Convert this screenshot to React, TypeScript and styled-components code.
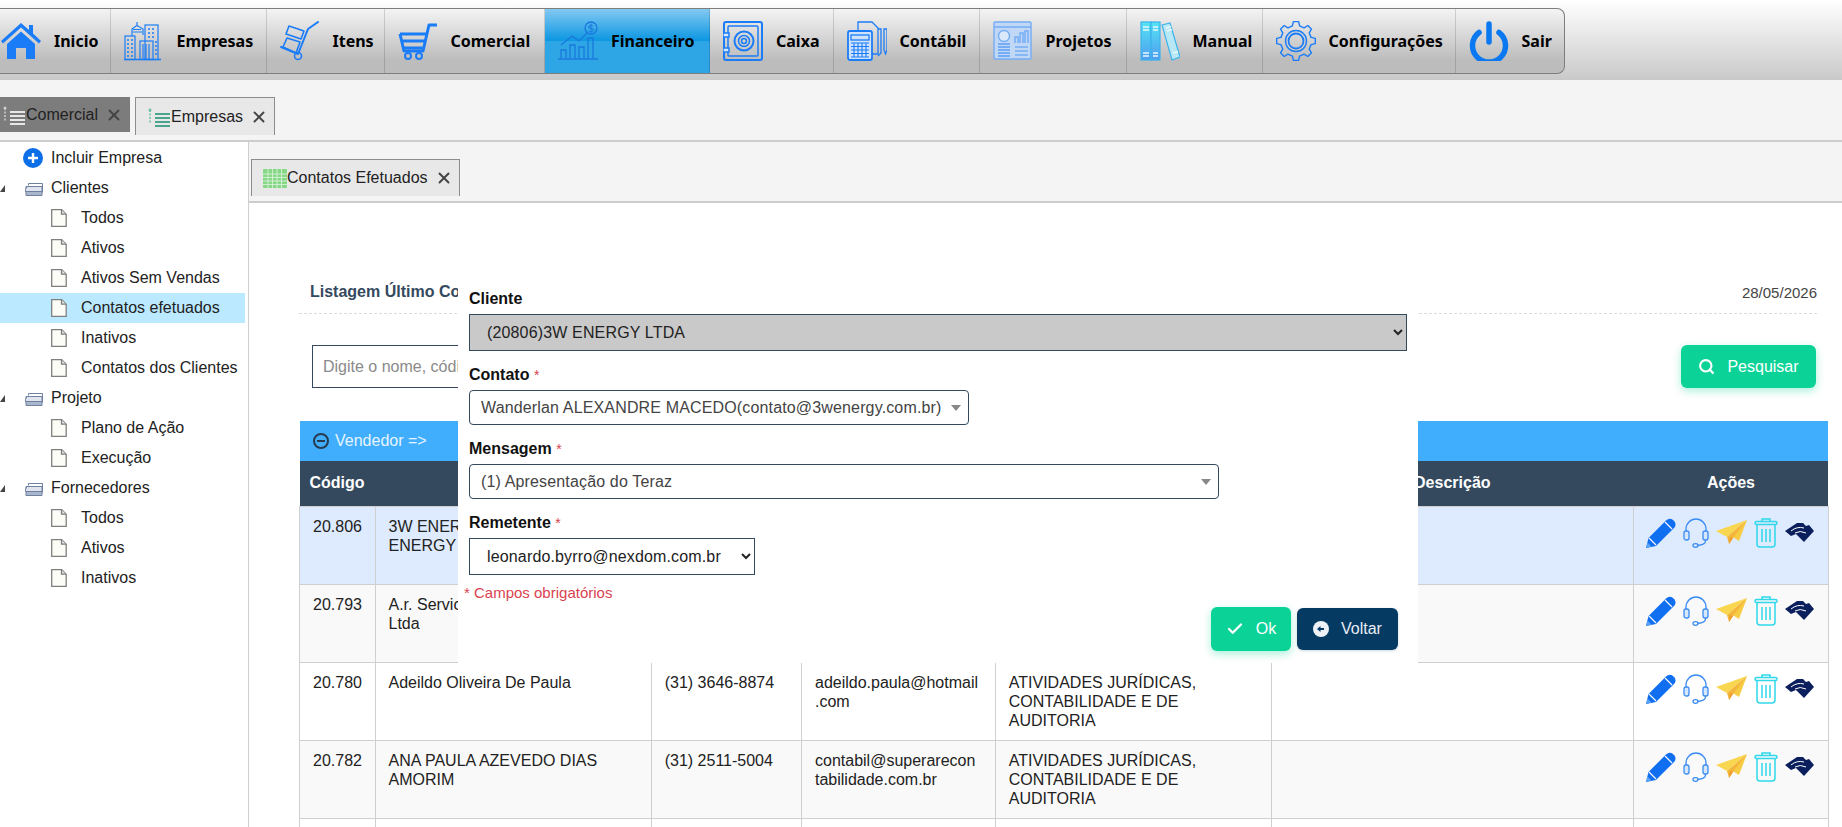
import React from 'react'
import styled, { createGlobalStyle } from 'styled-components'
import { Check, Search, X } from 'lucide-react'

const BLUE = '#1b7cf7'
const SLATE = '#34495e'
const GREEN = '#0bd398'

const GlobalStyle = createGlobalStyle`
  html, body {
    margin: 0;
    padding: 0;
    background: #fff;
    overflow: hidden;
  }
  body {
    font-family: "Liberation Sans", Arial, sans-serif;
    font-size: 16px;
    color: #222;
  }
  * { box-sizing: border-box; }
`

const Page = styled.div`
  height: 100vh;
  display: flex;
  flex-direction: column;
  overflow: hidden;
`

const Header = styled.header`
  height: 80px;
  flex: none;
  padding-top: 8px;
  background: linear-gradient(#ffffff, #c9c9c9);
`

const Nav = styled.nav`
  display: inline-flex;
  height: 66px;
  margin-left: -12px;
  border: 1px solid #7d7d7d;
  border-left: 0;
  border-radius: 0 8px 8px 0;
  overflow: hidden;
  background: linear-gradient(#f4f4f4, #e6e6e6 20%, #bcbcbc 80%, #bdbdbd);
`

const NavItem = styled.a<{ $active?: boolean; $width: number }>`
  display: flex;
  align-items: center;
  gap: 13px;
  width: ${(p) => p.$width}px;
  padding-left: 13px;
  border-right: 1px solid rgba(0, 0, 0, 0.14);
  font-family: "Noto Sans", sans-serif;
  font-size: 16px;
  font-weight: bold;
  color: #000;
  white-space: nowrap;
  cursor: pointer;
  background: ${(p) =>
    p.$active ? 'linear-gradient(#83c9f2, #0d97e2 49%, #2ea6e6 51%, #2ea6e6)' : 'transparent'};

  &:last-child {
    border-right: 0;
  }
  svg {
    width: 40px;
    height: 40px;
    flex: none;
  }
`

const TabRow = styled.div`
  height: 62px;
  flex: none;
  display: flex;
  align-items: flex-start;
  gap: 5px;
  padding-top: 17px;
  margin-left: -10px;
  background: #f4f4f4;
  border-bottom: 2px solid #cdcdcd;
`

const Tab = styled.div<{ $dark?: boolean }>`
  display: flex;
  align-items: center;
  height: ${(p) => (p.$dark ? '35px' : '38px')};
  padding: 0 6px 0 11px;
  border: 1px solid ${(p) => (p.$dark ? '#7c7c7c' : '#8c8c8c')};
  border-bottom: 0;
  background: ${(p) => (p.$dark ? '#7c7c7c' : '#e8e8e8')};
  color: #222;
  white-space: nowrap;

  > svg:first-child {
    flex: none;
  }
`

const SubTab = styled(Tab)`
  height: 37px;
`

const TabClose = styled(X)`
  width: 18px;
  height: 18px;
  margin-left: 7px;
  color: #444;
  stroke-width: 2.5;
`

const Body = styled.div`
  flex: 1;
  display: flex;
  min-height: 0;
`

const Sidebar = styled.aside`
  width: 249px;
  flex: none;
  padding-top: 1px;
  background: #fff;
  border-right: 1px solid #cfcfcf;
`

const TreeRow = styled.div<{ $child?: boolean; $selected?: boolean }>`
  display: flex;
  align-items: center;
  height: 30px;
  width: 245px;
  padding-left: ${(p) => (p.$child ? '51px' : '0')};
  background: ${(p) => (p.$selected ? '#bbe9ff' : 'transparent')};
  color: #222;
  white-space: nowrap;
`

const Toggler = styled.span`
  width: 0;
  height: 0;
  margin: 0 20px 0 0;
  border-style: solid;
  border-width: 0 0 7px 5px;
  border-color: transparent transparent #444 transparent;
`

const Main = styled.main`
  flex: 1;
  min-width: 0;
  position: relative;
`

const SubTabRow = styled.div`
  height: 61px;
  padding: 17px 0 0 2px;
  background: #f4f4f4;
  border-bottom: 2px solid #cdcdcd;
  display: flex;
`

const Content = styled.div`
  padding: 0 14px 0 50px;
`

const TitleRow = styled.div`
  display: flex;
  align-items: center;
  justify-content: space-between;
  height: 32px;
  margin: 79px 11px 0 0;
  padding: 0 0 11px 11px;
  border-bottom: 1px dashed #dcdcdc;
`

const Title = styled.h1`
  margin: 0;
  font-size: 16px;
  font-weight: bold;
  color: ${SLATE};
`

const DateText = styled.span`
  font-size: 15px;
  color: #444;
`

const SearchRow = styled.div`
  display: flex;
  align-items: center;
  justify-content: space-between;
  margin: 31px 12px 0 13px;
`

const SearchInput = styled.input`
  width: 1100px;
  height: 43px;
  padding: 0 10px;
  border: 1px solid ${SLATE};
  font: 16px "Liberation Sans", Arial, sans-serif;
  &::placeholder {
    color: #8a8a8a;
  }
`

const Button = styled.button<{ $variant: 'green' | 'navy' }>`
  display: inline-flex;
  align-items: center;
  justify-content: center;
  gap: 12px;
  border: 0;
  border-radius: 6px;
  font: 16px "Liberation Sans", Arial, sans-serif;
  color: ${(p) => (p.$variant === 'green' ? '#fff' : '#e8edf3')};
  background: ${(p) => (p.$variant === 'green' ? GREEN : '#053a63')};
  box-shadow: ${(p) =>
    p.$variant === 'green' ? '0 3px 8px rgba(11, 211, 152, 0.35)' : '0 1px 3px rgba(5, 58, 99, 0.2)'};
`

const SearchButton = styled(Button)`
  width: 135px;
  height: 43px;
`

const VendorBar = styled.div`
  display: flex;
  align-items: center;
  gap: 6px;
  height: 40px;
  margin-top: 33px;
  margin-left: 1px;
  padding-left: 13px;
  background: #40aefc;
  color: #e6f4ff;
`

const Table = styled.table`
  width: 1529px;
  border-collapse: collapse;
  table-layout: fixed;
`

const HeadCell = styled.th<{ $align?: string }>`
  height: 45px;
  padding: 0 10px;
  background: ${SLATE};
  color: #fff;
  font-size: 16px;
  font-weight: bold;
  text-align: ${(p) => p.$align ?? 'center'};
`

const Row = styled.tr<{ $tone: 'selected' | 'odd' | 'even' }>`
  background: ${(p) => (p.$tone === 'selected' ? '#deebfe' : p.$tone === 'odd' ? '#f9f9f9' : '#fff')};
`

const Cell = styled.td`
  height: 78px;
  padding: 10px 13px;
  border: 1px solid #cfcfcf;
  font-size: 16px;
  line-height: 19px;
  vertical-align: top;
  color: #222;
  overflow-wrap: anywhere;
`

const CodeCell = styled(Cell)`
  padding-right: 4px;
`

const MailCell = styled(Cell)`
  padding-right: 16px;
`

const Actions = styled.div`
  display: flex;
  align-items: center;
  gap: 7px;
  margin: 1px 0 0 -1px;
  svg {
    flex: none;
  }
`

const Modal = styled.div`
  position: absolute;
  left: 209px;
  top: 133px;
  width: 960px;
  height: 388px;
  padding: 14px 11px 0;
  background: #fff;
`

const Field = styled.div`
  margin-bottom: 14px;
`

const Label = styled.label`
  display: block;
  height: 20px;
  margin-bottom: 5px;
  font-size: 16px;
  line-height: 20px;
  font-weight: bold;
  color: #111;

  span {
    font-size: 14px;
    font-weight: normal;
    color: #d9434f;
  }
`

const NativeSelect = styled.select<{ $width: string; $locked?: boolean }>`
  display: block;
  width: ${(p) => p.$width};
  height: 37px;
  padding: 0 10px 0 13px;
  border: 1px solid ${SLATE};
  border-radius: 0;
  font: 16px "Liberation Sans", Arial, sans-serif;
  letter-spacing: 0.15px;
  color: #222;
  background: ${(p) => (p.$locked ? '#c9c9c9' : '#fff')};
`

const FakeSelect = styled.div<{ $width: string }>`
  display: flex;
  align-items: center;
  justify-content: space-between;
  width: ${(p) => p.$width};
  height: 35px;
  padding: 0 7px 0 11px;
  border: 1px solid ${SLATE};
  border-radius: 4px;
  letter-spacing: 0.15px;
  color: #444;
  white-space: nowrap;

  &::after {
    content: '';
    width: 0;
    height: 0;
    border-style: solid;
    border-width: 6px 5px 0 5px;
    border-color: #888 transparent transparent transparent;
  }
`

const RequiredNote = styled.div`
  height: 18px;
  margin: -5px 0 0 -5px;
  font-size: 15px;
  line-height: 18px;
  color: #d9434f;
`

const ModalButtons = styled.div`
  display: flex;
  align-items: center;
  justify-content: flex-end;
  gap: 6px;
  margin: 5px 9px 0 0;
`

const OkButton = styled(Button)`
  width: 80px;
  height: 44px;
`

const BackButton = styled(Button)`
  width: 101px;
  height: 42px;
`

// --- menu drawings ---

const HomeIcon = () => (
  <svg viewBox="0 0 40 40" fill={BLUE}>
    <path d="M0 20 20 2l8 7V4h4v8.500l8 7.500-2 2.500L20 6.500 2 22.500z" />
    <path d="M6 23 20 10.500 34 23v15H25V27H15v11H6z" />
  </svg>
)

const BuildingsIcon = () => (
  <svg viewBox="0 0 40 40" fill="none" stroke={BLUE} strokeWidth="1.200">
    <path d="M0 38.500h37" strokeWidth="1.500" />
    <rect x="1" y="15" width="10" height="23.500" />
    <path d="M8 15V8l4-3h2l5 3v6" />
    <path d="M13 1v4M9 11h9M9 8.500h8" />
    <rect x="21" y="4" width="13" height="34.500" />
    <rect x="16" y="20" width="13" height="18.500" />
    <path d="M19 23v15M22 23v15M25 23v15" />
    <g strokeDasharray="2 2" strokeWidth="1.500">
      <path d="M3 19h6M3 23h6M3 27h6M3 31h6M3 35h6M24 8h8M24 12h8M24 16h8M31 21h2M31 25h2M31 29h2M31 33h2" />
    </g>
  </svg>
)

const TrolleyIcon = () => (
  <svg viewBox="0 0 40 40" fill="none" stroke={BLUE} strokeWidth="1.600" strokeLinejoin="round">
    <path d="M38 1 28 8 18 33 1 26" strokeLinecap="round" strokeWidth="2" />
    <path d="M9 5 24 10 21 18 6 13z" />
    <path d="M7 17 20 21 16 32 3 26z" />
    <circle cx="18" cy="35" r="3.500" />
  </svg>
)

const CartIcon = () => (
  <svg viewBox="0 0 40 40" fill="none" stroke={BLUE}>
    <path d="M2 13h27M4 20h23M5.500 27h19" strokeWidth="3" />
    <path d="M2 13 6 30h19L31 4h8" strokeWidth="3" strokeLinejoin="round" />
    <circle cx="10" cy="35" r="3" strokeWidth="2" />
    <circle cx="21" cy="35" r="3" strokeWidth="2" />
  </svg>
)

const FinanceIcon = () => (
  <svg viewBox="0 0 40 40" fill="none" stroke="#1a78dc" strokeWidth="1.300">
    <path d="M0 38h40" />
    <path d="M3 37V29h5v8M12 37V24h5v13M21 37V26h5v11M30 37V17h5v20" />
    <path d="M3 24 14 15 21 20 30 11" />
    <circle cx="33" cy="7" r="6" />
    <path d="M35 5q-2-2-4 0t2 2q4 1 2 3t-4 0M33 2.500v9" strokeWidth="1" />
  </svg>
)

const SafeIcon = () => (
  <svg viewBox="0 0 40 40" fill="none" stroke={BLUE} strokeWidth="1.500">
    <rect x="1" y="1" width="38" height="38" rx="2" strokeWidth="2" />
    <rect x="5" y="5" width="30" height="30" rx="1" />
    <path d="M0 12h6v4H0zM0 27h6v4H0z" fill="#d6e8ff" />
    <circle cx="21" cy="20" r="9.500" strokeWidth="2" />
    <circle cx="21" cy="20" r="5.500" />
    <circle cx="21" cy="20" r="2.500" />
  </svg>
)

const LedgerIcon = () => (
  <svg viewBox="0 0 40 40" fill="none" stroke={BLUE} strokeWidth="1.300">
    <path d="M11 10V1h14l6 6v26h-6" />
    <path d="M31 8h3v24l-3 3" />
    <path d="M37 8v21l1.500 4L40 29V8z" />
    <rect x="1" y="10" width="24" height="29" rx="2" fill="#cfe2fb" strokeWidth="1.800" />
    <rect x="4" y="14" width="18" height="5" />
    <path d="M4 22h18M4 25.500h18M4 29h18M4 32.500h18M4 36h18M7 22v14M11 22v14M15 22v14M19 22v14" strokeWidth="1.100" />
  </svg>
)

const ProjectsIcon = () => (
  <svg viewBox="0 0 40 40" fill="none" stroke="#74adf5" strokeWidth="1.400">
    <rect x="1" y="1" width="37" height="37" rx="1" fill="#c0d8f5" />
    <path d="M1 6h37" strokeWidth="1.500" />
    <circle cx="11" cy="15" r="5.500" fill="#dce9fa" />
    <path d="M5 23h12M5 26h12M5 29h12M5 32h12M5 35h12" strokeWidth="2" />
    <path d="M22 22v-6h3v6M27 22V12h3v10M32 22V10h3v12" strokeWidth="1.500" />
    <path d="M22 26h13M22 30h13M22 34h13" />
  </svg>
)

const BindersIcon = () => (
  <svg viewBox="0 0 40 40" fill="none" strokeWidth="1.200">
    <defs>
      <linearGradient id="binderFill" x1="0" y1="0" x2="0" y2="1">
        <stop offset="0" stopColor="#54e4f4" />
        <stop offset="1" stopColor="#4f9cf0" />
      </linearGradient>
    </defs>
    <g fill="url(#binderFill)" stroke="#3db3ec">
      <rect x="1" y="1" width="10" height="38" />
      <rect x="11" y="1" width="9" height="38" />
      <path d="M22 4 30 2 40 36 32 39z" fill="#b8e8f6" />
    </g>
    <path d="M3 6h6M3 9h6M13 6h5M13 9h5M3 32h6M3 35h6M13 32h5M13 35h5M26 7l5-1.500M27 10l5-1.500M33 32l5-1.500" stroke="#e9f8fd" strokeWidth="1.500" />
  </svg>
)

function gearPath(teeth: number, outer: number, inner: number) {
  const step = (Math.PI * 2) / teeth
  const parts: string[] = []
  for (let i = 0; i < teeth; i++) {
    const a = i * step
    const pts = [
      [inner, a - step * 0.3],
      [outer, a - step * 0.17],
      [outer, a + step * 0.17],
      [inner, a + step * 0.3],
    ]
    pts.forEach(([r, t]) => {
      parts.push(`${(20 + r * Math.cos(t)).toFixed(2)} ${(20 + r * Math.sin(t)).toFixed(2)}`)
    })
  }
  return `M${parts.join('L')}Z`
}

const GearIcon = () => (
  <svg viewBox="0 0 40 40" fill="none" stroke={BLUE} strokeWidth="1.400" strokeLinejoin="round">
    <path d={gearPath(8, 19.500, 15.500)} />
    <circle cx="20" cy="20" r="10.500" />
    <circle cx="20" cy="20" r="7.500" strokeWidth="1.800" />
  </svg>
)

const PowerIcon = () => (
  <svg viewBox="0 0 40 40" fill="none" stroke="#0a78f0" strokeWidth="5.500" strokeLinecap="round">
    <path d="M10 11.500a16.500 16.500 0 1 0 20 0" />
    <path d="M20 3v18" />
  </svg>
)

// --- small drawings ---

const ListIcon = ({ lines, dots }: { lines: string; dots: string }) => (
  <svg width="24" height="24" viewBox="0 0 24 24" fill="none">
    <path d="M3 5v14" stroke={dots} strokeWidth="1.500" strokeDasharray="2 1.500" />
    <circle cx="3" cy="5" r="1.500" fill={dots} />
    <path d="M8 9h15M8 13h15M8 17h15M8 21h15" stroke={lines} strokeWidth="1.800" />
  </svg>
)

const GridIcon = () => (
  <svg width="24" height="19" viewBox="0 0 24 19" fill="#86d886">
    <rect width="24" height="19" rx="1" />
    <path d="M0 5h24M0 8.500h24M0 12h24M0 15.500h24M5 0v19M9.500 0v19M14 0v19M18.500 0v19" stroke="#dff5df" strokeWidth="0.800" />
  </svg>
)

const PlusCircle = () => (
  <svg width="20" height="20" viewBox="0 0 20 20">
    <circle cx="10" cy="10" r="10" fill="#0d6fe8" />
    <path d="M10 5v10M5 10h10" stroke="#fff" strokeWidth="2.400" />
  </svg>
)

const PlusSlot = styled.span`
  display: flex;
  margin: 0 8px 0 23px;
`

const FolderGlyph = styled.svg`
  flex: none;
  margin: 2px 8px 0 0;
`

const DocGlyph = styled.svg`
  flex: none;
  margin-right: 14px;
`

const FolderIcon = () => (
  <FolderGlyph width="18" height="13" viewBox="0 0 18 13" fill="#dfe4ee" stroke="#6f80a1">
    <path d="M3.500 2.500V.5h14v9" fill="none" />
    <path d="M1 3.500h16v9H1z" fill="#aab6cc" />
    <path d="M.5 6.500l1.500-3h15v5H.5z" />
  </FolderGlyph>
)

const DocIcon = () => (
  <DocGlyph width="16" height="18" viewBox="0 0 16 18" fill="#fdfdf8" stroke="#7f7f7f" strokeWidth="1.300">
    <path d="M.7.700h10l4.500 4.500v12.100H.7z" />
    <path d="M10.500.7V5.200H15" fill="#e6e6e6" />
  </DocGlyph>
)

const PencilIcon = () => (
  <svg width="30" height="30" viewBox="0 0 30 30">
    <path d="M0 30 2.500 20 20 2.500Q23.500-.5 27 2L28.500 3.500Q31 7 27.500 10.500L10 28z" fill="#0f6ff0" />
    <path d="M19 4 26 11M3 20l7 7" stroke="#fff" strokeWidth="1.100" />
    <path d="M0 30 1.500 24.500 5.500 28.500z" fill="#5aa2f5" />
  </svg>
)

const HeadsetIcon = () => (
  <svg width="26" height="30" viewBox="0 0 26 30" fill="none" stroke="#3a8cf4" strokeWidth="1.300">
    <path d="M3 13V11a10 10 0 0 1 20 0v2" />
    <rect x="1" y="13" width="5" height="9" rx="2" fill="#d6e6fb" />
    <rect x="20" y="13" width="5" height="9" rx="2" fill="#d6e6fb" />
    <path d="M22.500 22v1c0 3-3 4-8 4.500" />
    <ellipse cx="12.500" cy="27.500" rx="2.500" ry="1.800" />
  </svg>
)

const PlaneIcon = () => (
  <svg width="31" height="25" viewBox="0 0 31 25">
    <path d="M0 11 31 0 11 17z" fill="#f9d650" />
    <path d="M31 0 23 21 15 16z" fill="#f7cc45" />
    <path d="M31 0 11 17 13 24 17 18z" fill="#f4b63a" />
    <path d="M13 24 17 18 14 17z" fill="#ee9c2c" />
  </svg>
)

const TrashIcon = () => (
  <svg width="24" height="30" viewBox="0 0 24 30" fill="none" stroke="#2fd8ea" strokeWidth="1.500">
    <path d="M8 3V1h8v2" />
    <rect x="1" y="3.500" width="22" height="3" rx="1.500" />
    <path d="M3 7v19a3 3 0 0 0 3 3h12a3 3 0 0 0 3-3V7" />
    <path d="M8 11v13M12 11v13M16 11v13" />
  </svg>
)

const RevenueIcon = () => (
  <svg width="29" height="21" viewBox="0 0 29 21">
    <path d="M0 9 12 1 18 1 21 4 24 3 29 9 19 20 11 12 6 14z" fill="#0b1f5c" />
    <path d="M6 9Q12 4 19 6M10 11Q15 8 21 11" stroke="#fff" strokeWidth="1" fill="none" />
  </svg>
)

const MinusCircle = () => (
  <svg width="16" height="16" viewBox="0 0 16 16" fill="none" stroke="#263a50" strokeWidth="2">
    <circle cx="8" cy="8" r="7" />
    <path d="M4 8h8" />
  </svg>
)

const BackIcon = () => (
  <svg width="16" height="16" viewBox="0 0 16 16">
    <circle cx="8" cy="8" r="8" fill="#eef2f6" />
    <path d="M4 8l3.500-3v2H11v2H7.500v2z" fill="#053a63" />
  </svg>
)

const menu = [
  { label: 'Inicio', icon: <HomeIcon />, width: 122.5 },
  { label: 'Empresas', icon: <BuildingsIcon />, width: 156 },
  { label: 'Itens', icon: <TrolleyIcon />, width: 118 },
  { label: 'Comercial', icon: <CartIcon />, width: 160.5 },
  { label: 'Financeiro', icon: <FinanceIcon />, width: 165, active: true },
  { label: 'Caixa', icon: <SafeIcon />, width: 123.5 },
  { label: 'Contábil', icon: <LedgerIcon />, width: 146 },
  { label: 'Projetos', icon: <ProjectsIcon />, width: 147 },
  { label: 'Manual', icon: <BindersIcon />, width: 136 },
  { label: 'Configurações', icon: <GearIcon />, width: 193 },
  { label: 'Sair', icon: <PowerIcon />, width: 108.5 },
]

const tree = [
  {
    name: 'Clientes',
    items: ['Todos', 'Ativos', 'Ativos Sem Vendas', 'Contatos efetuados', 'Inativos', 'Contatos dos Clientes'],
  },
  { name: 'Projeto', items: ['Plano de Ação', 'Execução'] },
  { name: 'Fornecedores', items: ['Todos', 'Ativos', 'Inativos'] },
]

const columns = [75.5, 276.2, 150.3, 193.8, 275.9, 362.3, 195]

const activity = 'ATIVIDADES JURÍDICAS, CONTABILIDADE E DE AUDITORIA'

const rows = [
  { code: '20.806', name: '3W ENERGY SOLUÇÕES EM ENERGY', phone: '', mail: '', activity: '' },
  { code: '20.793', name: 'A.r. Servicos de Contabilidade Ltda', phone: '', mail: '', activity: '' },
  {
    code: '20.780',
    name: 'Adeildo Oliveira De Paula',
    phone: '(31) 3646-8874',
    mail: 'adeildo.paula@hotmail.com',
    activity,
  },
  {
    code: '20.782',
    name: 'ANA PAULA AZEVEDO DIAS AMORIM',
    phone: '(31) 2511-5004',
    mail: 'contabil@superarecontabilidade.com.br',
    activity,
  },
  { code: '', name: '', phone: '', mail: '', activity: '' },
]

function rowTone(index: number) {
  if (index === 0) return 'selected'
  return index % 2 === 1 ? 'odd' : 'even'
}

export default function App() {
  return (
    <Page>
      <GlobalStyle />
      <Header>
        <Nav>
          {menu.map((item) => (
            <NavItem key={item.label} $active={item.active} $width={item.width}>
              {item.icon}
              {item.label}
            </NavItem>
          ))}
        </Nav>
      </Header>

      <TabRow>
        <Tab $dark>
          <ListIcon lines="#e6e6e6" dots="#cfcfcf" />
          Comercial
          <TabClose />
        </Tab>
        <Tab>
          <ListIcon lines="#4aa58d" dots="#6cc0a8" />
          Empresas
          <TabClose />
        </Tab>
      </TabRow>

      <Body>
        <Sidebar>
          <TreeRow>
            <PlusSlot>
              <PlusCircle />
            </PlusSlot>
            Incluir Empresa
          </TreeRow>
          {tree.map((group) => (
            <React.Fragment key={group.name}>
              <TreeRow>
                <Toggler />
                <FolderIcon />
                {group.name}
              </TreeRow>
              {group.items.map((item) => (
                <TreeRow key={item} $child $selected={item === 'Contatos efetuados'}>
                  <DocIcon />
                  {item}
                </TreeRow>
              ))}
            </React.Fragment>
          ))}
        </Sidebar>

        <Main>
          <SubTabRow>
            <SubTab>
              <GridIcon />
              Contatos Efetuados
              <TabClose />
            </SubTab>
          </SubTabRow>

          <Content>
            <TitleRow>
              <Title>Listagem Último Contato</Title>
              <DateText>28/05/2026</DateText>
            </TitleRow>

            <SearchRow>
              <SearchInput placeholder="Digite o nome, código" />
              <SearchButton $variant="green">
                <Search size={17} strokeWidth={3} />
                Pesquisar
              </SearchButton>
            </SearchRow>

            <VendorBar>
              <MinusCircle />
              Vendedor =&gt;
            </VendorBar>

            <Table>
              <colgroup>
                {columns.map((width, i) => (
                  <col key={i} width={width} />
                ))}
              </colgroup>
              <thead>
                <tr>
                  <HeadCell $align="left">Código</HeadCell>
                  <HeadCell />
                  <HeadCell />
                  <HeadCell />
                  <HeadCell />
                  <HeadCell>Descrição</HeadCell>
                  <HeadCell>Ações</HeadCell>
                </tr>
              </thead>
              <tbody>
                {rows.map((row, i) => (
                  <Row key={i} $tone={rowTone(i)}>
                    <CodeCell>{row.code}</CodeCell>
                    <Cell>{row.name}</Cell>
                    <Cell>{row.phone}</Cell>
                    <MailCell>{row.mail}</MailCell>
                    <Cell>{row.activity}</Cell>
                    <Cell />
                    <Cell>
                      {row.code && (
                        <Actions>
                          <PencilIcon />
                          <HeadsetIcon />
                          <PlaneIcon />
                          <TrashIcon />
                          <RevenueIcon />
                        </Actions>
                      )}
                    </Cell>
                  </Row>
                ))}
              </tbody>
            </Table>
          </Content>

          <Modal>
            <Field>
              <Label>Cliente</Label>
              <NativeSelect $width="100%" $locked defaultValue="20806">
                <option value="20806">(20806)3W ENERGY LTDA</option>
              </NativeSelect>
            </Field>
            <Field>
              <Label>
                Contato <span>*</span>
              </Label>
              <FakeSelect $width="500px">Wanderlan ALEXANDRE MACEDO(contato@3wenergy.com.br)</FakeSelect>
            </Field>
            <Field>
              <Label>
                Mensagem <span>*</span>
              </Label>
              <FakeSelect $width="750px">(1) Apresentação do Teraz</FakeSelect>
            </Field>
            <Field>
              <Label>
                Remetente <span>*</span>
              </Label>
              <NativeSelect $width="286px" defaultValue="leonardo">
                <option value="leonardo">leonardo.byrro@nexdom.com.br</option>
              </NativeSelect>
            </Field>
            <RequiredNote>* Campos obrigatórios</RequiredNote>
            <ModalButtons>
              <OkButton $variant="green">
                <Check size={18} strokeWidth={3} />
                Ok
              </OkButton>
              <BackButton $variant="navy">
                <BackIcon />
                Voltar
              </BackButton>
            </ModalButtons>
          </Modal>
        </Main>
      </Body>
    </Page>
  )
}
